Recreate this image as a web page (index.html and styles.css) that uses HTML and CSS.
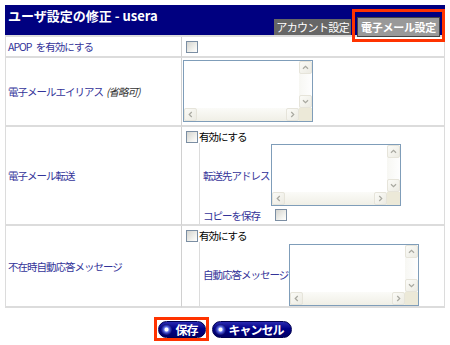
FILE: index.html
```html
<!DOCTYPE html>
<html lang="ja">

<head>
    <meta charset="UTF-8">
    <title>ユーザ設定の修正</title>
    <link rel="stylesheet" href="styles.css">
</head>

<body>
    <div class="page">
        <div class="head">
            <div class="title">ユーザ設定の修正 - usera</div>
            <div class="tabs">
                <span class="tab">アカウント設定</span>
                <span class="tab tab-on mark">電子メール設定</span>
            </div>
        </div>

        <div class="form">
            <div class="label">APOP を有効にする</div>
            <div class="field field-check"><input type="checkbox" class="cb"></div>

            <div class="label">電子メールエイリアス <em>(省略可)</em></div>
            <div class="field field-ta">
                <div class="ta">
                    <textarea></textarea>
                    <div class="vbar"><span class="sb"><svg viewBox="0 0 13 13"><polyline points="3.5,8 6.5,5 9.5,8"/></svg></span><span class="sb"><svg viewBox="0 0 13 13"><polyline points="3.5,5 6.5,8 9.5,5"/></svg></span></div>
                    <div class="hbar"><span class="sb"><svg viewBox="0 0 13 13"><polyline points="8,3.5 5,6.5 8,9.5"/></svg></span><span class="sb"><svg viewBox="0 0 13 13"><polyline points="5,3.5 8,6.5 5,9.5"/></svg></span></div>
                    <div class="corner"></div>
                </div>
            </div>

            <div class="label">電子メール転送</div>
            <div class="field">
                <label class="check"><input type="checkbox" class="cb">有効にする</label>
                <div class="sub">
                    <div class="sub-label">転送先アドレス</div>
                    <div class="ta">
                        <textarea></textarea>
                        <div class="vbar"><span class="sb"><svg viewBox="0 0 13 13"><polyline points="3.5,8 6.5,5 9.5,8"/></svg></span><span class="sb"><svg viewBox="0 0 13 13"><polyline points="3.5,5 6.5,8 9.5,5"/></svg></span></div>
                        <div class="hbar"><span class="sb"><svg viewBox="0 0 13 13"><polyline points="8,3.5 5,6.5 8,9.5"/></svg></span><span class="sb"><svg viewBox="0 0 13 13"><polyline points="5,3.5 8,6.5 5,9.5"/></svg></span></div>
                        <div class="corner"></div>
                    </div>
                    <div class="sub-label sub-copy">コピーを保存</div>
                    <div class="sub-copy"><input type="checkbox" class="cb cb-copy"></div>
                </div>
            </div>

            <div class="label">不在時自動応答メッセージ</div>
            <div class="field">
                <label class="check"><input type="checkbox" class="cb">有効にする</label>
                <div class="sub">
                    <div class="sub-label">自動応答メッセージ</div>
                    <div class="ta">
                        <textarea></textarea>
                        <div class="vbar"><span class="sb"><svg viewBox="0 0 13 13"><polyline points="3.5,8 6.5,5 9.5,8"/></svg></span><span class="sb"><svg viewBox="0 0 13 13"><polyline points="3.5,5 6.5,8 9.5,5"/></svg></span></div>
                        <div class="hbar"><span class="sb"><svg viewBox="0 0 13 13"><polyline points="8,3.5 5,6.5 8,9.5"/></svg></span><span class="sb"><svg viewBox="0 0 13 13"><polyline points="5,3.5 8,6.5 5,9.5"/></svg></span></div>
                        <div class="corner"></div>
                    </div>
                </div>
            </div>
        </div>

        <div class="buttons">
            <button class="btn mark"><span class="ico"></span>保存</button>
            <button class="btn"><span class="ico"></span>キャンセル</button>
        </div>
    </div>
</body>

</html>
```

FILE: styles.css
```css
body {
    margin: 0;
    font-family: "Noto Sans CJK JP", sans-serif;
    font-size: 10.5px;
    letter-spacing: -1px;
    word-spacing: 3px;
    color: #000;
    background: #fff;
}

.page {
    padding: 5px;
    width: 440px;
}

/* header band */
.head {
    display: flex;
    justify-content: space-between;
    height: 30px;
    background: #000080;
}

.title {
    padding: 2px 0 0 3px;
    color: #fff;
    font-size: 13px;
    font-weight: bold;
    letter-spacing: 0;
    word-spacing: 0;
    line-height: 17px;
}

.tabs {
    display: flex;
    align-items: flex-end;
    gap: 6px;
    margin-right: 5px;
}

.tab {
    display: block;
    height: 16px;
    padding: 0 2px;
    background: #666;
    color: #fff;
    font-size: 11px;
    letter-spacing: -0.6px;
    line-height: 16px;
}

.tab-on {
    height: 18px;
    margin-bottom: -2px;
    padding: 0 3px;
    background: #999;
    border: 1px solid #444;
    font-weight: bold;
    letter-spacing: -0.3px;
    line-height: 18px;
}

/* red highlight box drawn over the page */
.mark {
    position: relative;
}

.mark::after {
    content: "";
    position: absolute;
    inset: -9px -6px -6px -6px;
    border: 3px solid #ff3300;
    pointer-events: none;
}

/* form grid */
.form {
    display: grid;
    grid-template-columns: 176px 1fr;
    grid-template-rows: 21px 69px 99px 82px;
    border-top: 2px solid #dcdcdc;
    border-left: 1px solid #dcdcdc;
    border-right: 1px solid #dcdcdc;
}

.label,
.field {
    box-sizing: border-box;
    border-bottom: 2px solid #dcdcdc;
}

.label {
    display: flex;
    align-items: center;
    padding-left: 2px;
    border-right: 1px solid #d0d0d0;
    color: #333399;
}

.label em {
    margin-left: 3px;
    color: #333;
}

.field {
    display: flex;
    flex-direction: column;
}

.field-check {
    justify-content: center;
    padding-left: 4px;
}

.field-ta {
    padding: 2px 0 0 1px;
}

.cb {
    appearance: none;
    box-sizing: border-box;
    width: 12px;
    height: 12px;
    margin: 0;
    border: 1px solid #7b8ea3;
    background: linear-gradient(135deg, #d4d4cf, #f4f4f0 70%, #fff);
}

.check {
    display: flex;
    align-items: center;
    height: 13px;
    margin: 3px 0 0 4px;
    line-height: 13px;
}

.check .cb {
    margin-right: 1px;
}

.sub {
    flex: 1;
    display: grid;
    grid-template-columns: auto auto;
    justify-content: start;
    align-items: center;
    column-gap: 1px;
    margin-left: 17px;
    padding: 1px 0 0 3px;
    border-left: 1px solid #dcdcdc;
}

.sub-label {
    color: #333399;
}

.sub-copy {
    align-self: center;
    height: 17px;
    display: flex;
    align-items: center;
}

.cb-copy {
    margin-left: 4px;
}

/* textarea with xp style scrollbars */
.ta {
    display: grid;
    grid-template-columns: 115px 13px;
    grid-template-rows: 47px 13px;
    width: max-content;
    border: 1px solid #7f9db9;
    background: #fff;
}

.ta textarea {
    margin: 0;
    padding: 0;
    border: 0;
    resize: none;
    outline: none;
    overflow: hidden;
}

.vbar,
.hbar {
    display: flex;
    justify-content: space-between;
}

.vbar {
    flex-direction: column;
    background: linear-gradient(90deg, #f7f7f3, #fefefe);
}

.hbar {
    background: linear-gradient(#fbfbf8, #f0efe6);
}

.sb {
    box-sizing: border-box;
    width: 13px;
    height: 13px;
    border: 1px solid #e6e4da;
    border-radius: 2px;
    background: linear-gradient(135deg, #fbfbf7, #ecebe3);
}

.sb svg {
    display: block;
    width: 11px;
    height: 11px;
    fill: none;
    stroke: #a8a8a0;
    stroke-width: 1.4;
}

.corner {
    background: #ece9d8;
}

/* buttons */
.buttons {
    display: flex;
    justify-content: center;
    gap: 6px;
    margin-top: 13px;
}

.buttons .mark::after {
    inset: -5px -4px -4px -5px;
}

.btn {
    display: flex;
    align-items: center;
    gap: 3px;
    height: 17px;
    margin: 0;
    padding: 0 7px 0 2px;
    border: 1px solid #000050;
    border-radius: 9px;
    background: linear-gradient(#2a2ab0, #000088 45%, #000066);
    color: #fff;
    font-family: inherit;
    font-size: 12px;
    font-weight: bold;
    letter-spacing: -1px;
    line-height: 15px;
}

.ico {
    width: 11px;
    height: 11px;
    border-radius: 50%;
    background: radial-gradient(circle, #fff 0 1.5px, #6c7ee8 2.5px, #3038b8 4px, #141470 5.5px);
}
```
